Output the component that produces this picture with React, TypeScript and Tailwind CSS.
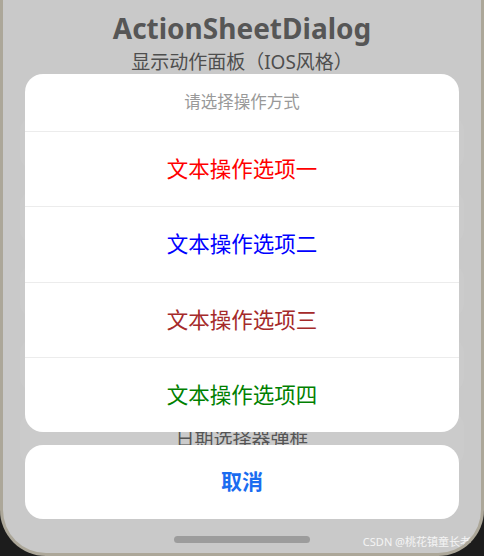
import React from 'react';

const font = { fontFamily: '"Noto Sans", "Noto Sans CJK SC", sans-serif' };

const options = [
  { label: '文本操作选项一', color: 'text-[#ff0000]' },
  { label: '文本操作选项二', color: 'text-[#0000ff]' },
  { label: '文本操作选项三', color: 'text-[#a52a2a]' },
  { label: '文本操作选项四', color: 'text-[#008000]' },
];

export default function App() {
  return (
    <div className="h-[556px] w-[484px] overflow-hidden bg-[#1c1c1c]" style={font}>
      <div className="relative h-full overflow-hidden rounded-b-[46px] border-x-[3px] border-b-[3px] border-[#aca799] bg-[#c9c9c9]">
        {/* page behind the dim layer */}
        <div className="flex flex-col items-center px-[17px] pt-[11px]">
          <h1 className="text-[28px] font-bold leading-[34px] text-[#565656]">ActionSheetDialog</h1>
          <p className="mt-[4px] text-[19px] leading-[26px] text-[#4e4e4e]">显示动作面板（IOS风格）</p>
          <div className="mt-[40px] flex w-full flex-col gap-[18px]">
            <div className="h-[56px] rounded-[16px] bg-[#cbcbcb]" />
            <div className="h-[56px] rounded-[16px] bg-[#cbcbcb]" />
            <div className="h-[56px] rounded-[16px] bg-[#cbcbcb]" />
            <div className="h-[56px] rounded-[16px] bg-[#cbcbcb]" />
            <div className="flex h-[56px] items-center justify-center rounded-[16px] bg-[#cbcbcb]">
              <span className="text-[19px] text-[#555]">日期选择器弹框</span>
            </div>
          </div>
        </div>

        {/* action sheet */}
        <div className="absolute inset-x-0 top-[74px] flex flex-col gap-[13px] px-[22px]">
          <div className="flex h-[358px] flex-col overflow-hidden rounded-[18px] bg-white">
            <div className="flex h-[57px] items-center justify-center text-[16.5px] text-[#999999]">
              请选择操作方式
            </div>
            {options.map((o) => (
              <div key={o.label} className="flex flex-1 items-center justify-center border-t border-[#ececec]">
                <span className={`text-[21.5px] ${o.color}`}>{o.label}</span>
              </div>
            ))}
          </div>
          <button
            type="button"
            className="flex h-[74px] items-center justify-center rounded-[18px] bg-white text-[21px] font-bold text-[#1a6cf0]"
          >
            取消
          </button>
        </div>

        <div className="absolute bottom-[10px] left-[171px] h-[7px] w-[136px] rounded-full bg-[#9c9c9c]" />
        <span className="absolute bottom-[3px] right-[10px] text-[11px] text-white/80">CSDN @桃花镇童长老</span>
      </div>
    </div>
  );
}
